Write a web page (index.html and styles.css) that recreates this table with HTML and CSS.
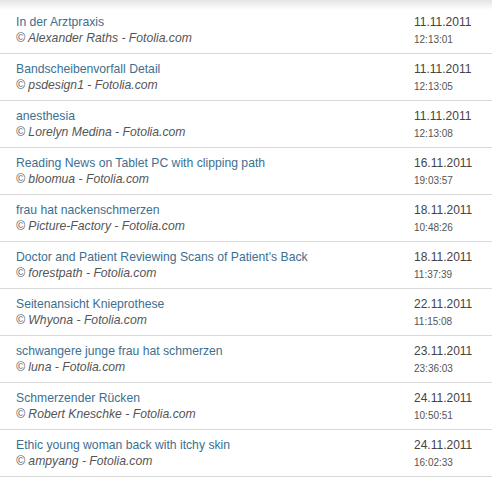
FILE: index.html
```html
<!DOCTYPE html>
<html>
<head>
<meta charset="utf-8">
<link rel="stylesheet" href="styles.css">
</head>
<body>
<div class="list">
  <div class="row"><div class="info"><a class="title">In der Arztpraxis</a><div class="credit">© Alexander Raths - Fotolia.com</div></div><div class="when"><div class="date">11.11.2011</div><div class="time">12:13:01</div></div></div>
  <div class="row"><div class="info"><a class="title">Bandscheibenvorfall Detail</a><div class="credit">© psdesign1 - Fotolia.com</div></div><div class="when"><div class="date">11.11.2011</div><div class="time">12:13:05</div></div></div>
  <div class="row"><div class="info"><a class="title">anesthesia</a><div class="credit">© Lorelyn Medina - Fotolia.com</div></div><div class="when"><div class="date">11.11.2011</div><div class="time">12:13:08</div></div></div>
  <div class="row"><div class="info"><a class="title">Reading News on Tablet PC with clipping path</a><div class="credit">© bloomua - Fotolia.com</div></div><div class="when"><div class="date">16.11.2011</div><div class="time">19:03:57</div></div></div>
  <div class="row"><div class="info"><a class="title">frau hat nackenschmerzen</a><div class="credit">© Picture-Factory - Fotolia.com</div></div><div class="when"><div class="date">18.11.2011</div><div class="time">10:48:26</div></div></div>
  <div class="row"><div class="info"><a class="title">Doctor and Patient Reviewing Scans of Patient's Back</a><div class="credit">© forestpath - Fotolia.com</div></div><div class="when"><div class="date">18.11.2011</div><div class="time">11:37:39</div></div></div>
  <div class="row"><div class="info"><a class="title">Seitenansicht Knieprothese</a><div class="credit">© Whyona - Fotolia.com</div></div><div class="when"><div class="date">22.11.2011</div><div class="time">11:15:08</div></div></div>
  <div class="row"><div class="info"><a class="title">schwangere junge frau hat schmerzen</a><div class="credit">© luna - Fotolia.com</div></div><div class="when"><div class="date">23.11.2011</div><div class="time">23:36:03</div></div></div>
  <div class="row"><div class="info"><a class="title">Schmerzender Rücken</a><div class="credit">© Robert Kneschke - Fotolia.com</div></div><div class="when"><div class="date">24.11.2011</div><div class="time">10:50:51</div></div></div>
  <div class="row"><div class="info"><a class="title">Ethic young woman back with itchy skin</a><div class="credit">© ampyang - Fotolia.com</div></div><div class="when"><div class="date">24.11.2011</div><div class="time">16:02:33</div></div></div>
</div>
</body>
</html>
```
FILE: styles.css
```css
html, body {
  margin: 0;
  padding: 0;
  background: #fff;
}
body {
  font-family: "Liberation Sans", Arial, sans-serif;
  overflow: hidden;
}
.list {
  padding-top: 7px;
  background: linear-gradient(to bottom, #e4e4e4 0, #ffffff 10px) no-repeat;
  background-size: 100% 10px;
}
.row {
  display: flex;
  justify-content: space-between;
  height: 46px;
  border-bottom: 1px solid #d9d9d9;
  box-sizing: content-box;
}
.info {
  padding: 7px 0 0 16px;
}
.title {
  display: block;
  font-size: 12.2px;
  line-height: 16px;
  color: #3d6f90;
  text-decoration: none;
}
.credit {
  font-size: 12.2px;
  line-height: 16px;
  font-style: italic;
  color: #555;
}
.when {
  width: 78px;
  padding-top: 7px;
}
.date {
  font-size: 12px;
  line-height: 16px;
  color: #444;
}
.time {
  font-size: 10px;
  line-height: 20px;
  color: #555;
}
```
